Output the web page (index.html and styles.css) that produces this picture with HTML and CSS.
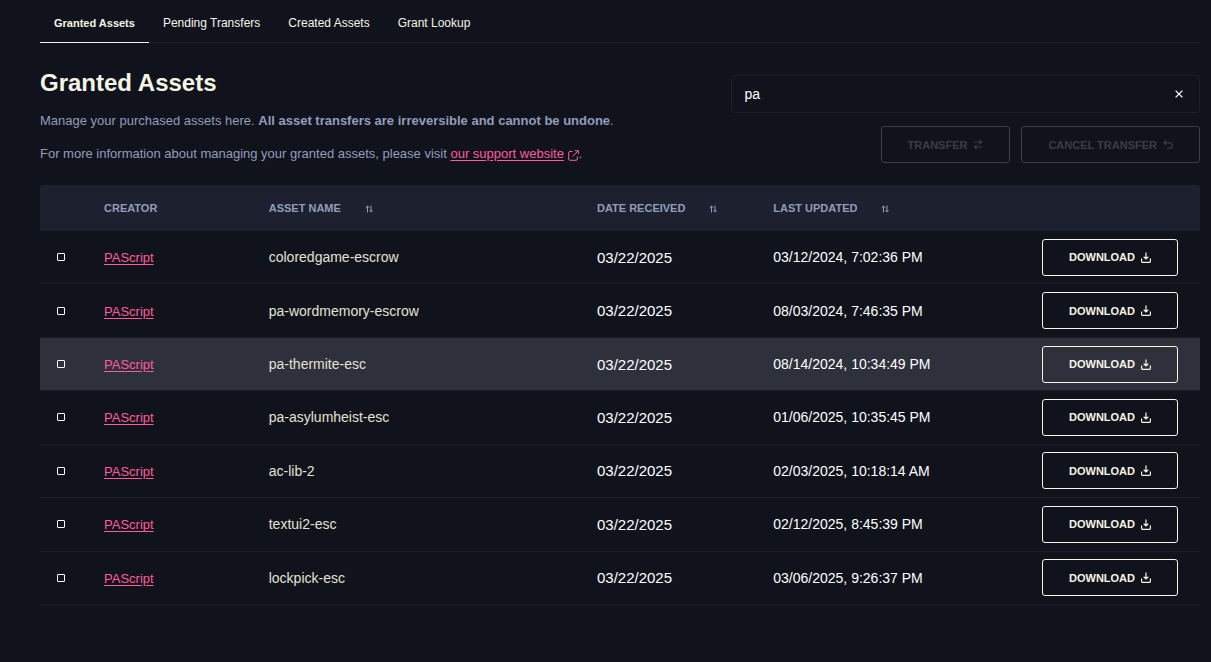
FILE: index.html
```html
<!DOCTYPE html>
<html lang="en">
<head>
    <meta charset="UTF-8">
    <meta name="viewport" content="width=device-width, initial-scale=1.0">
    <title>Granted Assets</title>
    <link rel="stylesheet" href="styles.css">
</head>
<body>
    <!-- icons used more than once -->
    <svg class="sprite" aria-hidden="true">
        <symbol id="icon-sort" viewBox="0 0 8 8">
            <path d="M2.5 7.5V1M0.7 2.8L2.5 1l1.8 1.8M6 0.5V7M4.5 5.4L6 7l1.6-1.6"/>
        </symbol>
        <symbol id="icon-download" viewBox="0 0 10 11">
            <path d="M5 0.5V7M2.7 4.8L5 7l2.3-2.2M0.6 6.5v3.1q0 0.8 0.8 0.8h7.2q0.8 0 0.8-0.8V6.5"/>
        </symbol>
    </svg>

    <nav class="tabs">
        <a class="tab active" href="#granted">Granted Assets</a>
        <a class="tab" href="#pending">Pending Transfers</a>
        <a class="tab" href="#created">Created Assets</a>
        <a class="tab" href="#lookup">Grant Lookup</a>
    </nav>

    <main>
        <div class="top">
            <div class="intro">
                <h1>Granted Assets</h1>
                <p>Manage your purchased assets here. <strong>All asset transfers are irreversible and cannot be undone</strong>.</p>
                <p>For more information about managing your granted assets, please visit <a href="#support">our support website</a>
                    <svg class="external" viewBox="0 0 11 11"><path d="M4.5 1.5H2Q0.7 1.5 0.7 2.8V9Q0.7 10.3 2 10.3H8Q9.3 10.3 9.3 9V6.5M6.8 0.7h3.5v3.5M10.2 0.8L4.6 6.4"/></svg>.</p>
            </div>
            <div class="tools">
                <div class="search">
                    <input type="text" value="pa" aria-label="Search assets">
                    <button class="clear" aria-label="Clear search">
                        <svg viewBox="0 0 8 8"><path d="M0.6 0.6l6.8 6.8M7.4 0.6L0.6 7.4"/></svg>
                    </button>
                </div>
                <div class="actions">
                    <button class="btn" disabled>TRANSFER
                        <svg viewBox="0 0 10 11"><path d="M1 3h7.5M6.3 0.8l2.2 2.2-2.2 2.2M9 8H1.5M3.7 5.8L1.5 8l2.2 2.2"/></svg>
                    </button>
                    <button class="btn" disabled>CANCEL TRANSFER
                        <svg viewBox="0 0 10 11"><path d="M3.4 1.2L0.9 3.7l2.5 2.5M0.9 3.7h5.2q3.1 0 3.1 2.8T6.1 9.4H4.2"/></svg>
                    </button>
                </div>
            </div>
        </div>

        <table>
            <thead>
                <tr>
                    <th class="col-check"></th>
                    <th class="col-creator">CREATOR</th>
                    <th class="col-name">ASSET NAME <button class="sort" aria-label="Sort by name"><svg><use href="#icon-sort"/></svg></button></th>
                    <th class="col-date">DATE RECEIVED <button class="sort" aria-label="Sort by date received"><svg><use href="#icon-sort"/></svg></button></th>
                    <th class="col-updated">LAST UPDATED <button class="sort" aria-label="Sort by last updated"><svg><use href="#icon-sort"/></svg></button></th>
                    <th></th>
                </tr>
            </thead>
            <tbody>
                <tr>
                    <td class="check"><input type="checkbox" aria-label="coloredgame-escrow"></td>
                    <td><a href="#pascript">PAScript</a></td>
                    <td class="name">coloredgame-escrow</td>
                    <td class="date">03/22/2025</td>
                    <td>03/12/2024, 7:02:36 PM</td>
                    <td class="last"><button class="btn">DOWNLOAD <svg><use href="#icon-download"/></svg></button></td>
                </tr>
                <tr>
                    <td class="check"><input type="checkbox" aria-label="pa-wordmemory-escrow"></td>
                    <td><a href="#pascript">PAScript</a></td>
                    <td class="name">pa-wordmemory-escrow</td>
                    <td class="date">03/22/2025</td>
                    <td>08/03/2024, 7:46:35 PM</td>
                    <td class="last"><button class="btn">DOWNLOAD <svg><use href="#icon-download"/></svg></button></td>
                </tr>
                <tr class="highlight">
                    <td class="check"><input type="checkbox" aria-label="pa-thermite-esc"></td>
                    <td><a href="#pascript">PAScript</a></td>
                    <td class="name">pa-thermite-esc</td>
                    <td class="date">03/22/2025</td>
                    <td>08/14/2024, 10:34:49 PM</td>
                    <td class="last"><button class="btn">DOWNLOAD <svg><use href="#icon-download"/></svg></button></td>
                </tr>
                <tr>
                    <td class="check"><input type="checkbox" aria-label="pa-asylumheist-esc"></td>
                    <td><a href="#pascript">PAScript</a></td>
                    <td class="name">pa-asylumheist-esc</td>
                    <td class="date">03/22/2025</td>
                    <td>01/06/2025, 10:35:45 PM</td>
                    <td class="last"><button class="btn">DOWNLOAD <svg><use href="#icon-download"/></svg></button></td>
                </tr>
                <tr>
                    <td class="check"><input type="checkbox" aria-label="ac-lib-2"></td>
                    <td><a href="#pascript">PAScript</a></td>
                    <td class="name">ac-lib-2</td>
                    <td class="date">03/22/2025</td>
                    <td>02/03/2025, 10:18:14 AM</td>
                    <td class="last"><button class="btn">DOWNLOAD <svg><use href="#icon-download"/></svg></button></td>
                </tr>
                <tr>
                    <td class="check"><input type="checkbox" aria-label="textui2-esc"></td>
                    <td><a href="#pascript">PAScript</a></td>
                    <td class="name">textui2-esc</td>
                    <td class="date">03/22/2025</td>
                    <td>02/12/2025, 8:45:39 PM</td>
                    <td class="last"><button class="btn">DOWNLOAD <svg><use href="#icon-download"/></svg></button></td>
                </tr>
                <tr>
                    <td class="check"><input type="checkbox" aria-label="lockpick-esc"></td>
                    <td><a href="#pascript">PAScript</a></td>
                    <td class="name">lockpick-esc</td>
                    <td class="date">03/22/2025</td>
                    <td>03/06/2025, 9:26:37 PM</td>
                    <td class="last"><button class="btn">DOWNLOAD <svg><use href="#icon-download"/></svg></button></td>
                </tr>
            </tbody>
        </table>
    </main>
</body>
</html>
```
FILE: styles.css
```css
* {
    box-sizing: border-box;
}

body {
    margin: 0;
    padding: 0 11px 0 40px;
    background-color: #10131b;
    color: #f5f5e6;
    font-family: "Liberation Sans", Arial, sans-serif;
    font-size: 13px;
}

a {
    color: #ff5c9c;
    text-underline-offset: 2px;
}

svg {
    fill: none;
    stroke: currentColor;
}

.sprite {
    display: none;
}

/* tabs */
.tabs {
    display: flex;
    height: 43px;
    border-bottom: 1px solid #1a1d2a;
}

.tab {
    padding: 16px 14px 0;
    margin-bottom: -1px;
    color: #f5f5e6;
    font-size: 12px;
    line-height: 14px;
    text-decoration: none;
}

.tab.active {
    border-bottom: 1px solid #f5f5e6;
    font-size: 11px;
    font-weight: bold;
}

/* title and search */
.top {
    display: flex;
    justify-content: space-between;
    padding: 24px 0 22px;
}

h1 {
    margin: 0 0 14px;
    font-size: 24px;
    line-height: 32px;
}

.intro p {
    margin: 0 0 17px;
    color: #909dbd;
    line-height: 16px;
}

.intro p:last-child {
    margin-bottom: 0;
}

.external {
    width: 11px;
    height: 11px;
    color: #ff5c9c;
    vertical-align: -3px;
}

.tools {
    width: 40.4%;
    padding-top: 8px;
}

.search {
    display: flex;
    align-items: center;
    height: 38px;
    padding: 0 12px;
    border: 1px solid #1a1d2a;
    border-radius: 3px;
}

.search input {
    flex: 1;
    padding: 0;
    border: none;
    outline: none;
    background: none;
    color: #fff;
    font-family: inherit;
    font-size: 14px;
}

.clear {
    display: flex;
    padding: 4px;
    border: none;
    background: none;
    color: #fff;
}

.clear svg {
    width: 8px;
    height: 8px;
    stroke-width: 1.3;
}

.actions {
    display: flex;
    justify-content: flex-end;
    gap: 11px;
    margin-top: 13px;
}

.btn {
    display: inline-flex;
    align-items: center;
    gap: 6px;
    height: 37px;
    padding: 0 26px;
    border: 1px solid #f5f5e6;
    border-radius: 3px;
    background: none;
    color: #f5f5e6;
    font-family: inherit;
    font-size: 11px;
    font-weight: bold;
    vertical-align: middle;
}

.btn svg {
    width: 10px;
    height: 11px;
    stroke-width: 1.2;
}

.btn:disabled {
    border-color: #3c3e45;
    color: #3c3d43;
}

/* assets table */
table {
    width: 100%;
    height: 420px;
    table-layout: fixed;
    border-spacing: 0;
}

th {
    height: 46px;
    padding: 0 16px;
    background-color: #1d202e;
    color: #909dbd;
    font-size: 11px;
    text-align: left;
}

th:first-child {
    border-top-left-radius: 4px;
}

th:last-child {
    border-top-right-radius: 4px;
}

.col-check {
    width: 48px;
}

.col-creator {
    width: 14.2%;
}

.col-name {
    width: 28.3%;
}

.col-date {
    width: 15.2%;
}

.col-updated {
    width: 20%;
}

.sort {
    margin-left: 21px;
    padding: 0;
    border: none;
    background: none;
    color: inherit;
    vertical-align: middle;
}

.sort svg {
    display: block;
    width: 8px;
    height: 8px;
}

td {
    padding: 0 16px;
    border-bottom: 1px solid #1a1d2a;
    color: #fff;
    font-size: 14px;
}

td a {
    font-size: 13px;
}

.name {
    color: #e2e2d5;
}

.date {
    font-size: 15px;
}

.check input {
    display: block;
    appearance: none;
    width: 8px;
    height: 8px;
    margin: 0 1px;
    border: 1px solid #fff;
    border-radius: 1px;
}

.last {
    padding-right: 22px;
    text-align: right;
}

.highlight td {
    background-color: #2e303b;
}
```
